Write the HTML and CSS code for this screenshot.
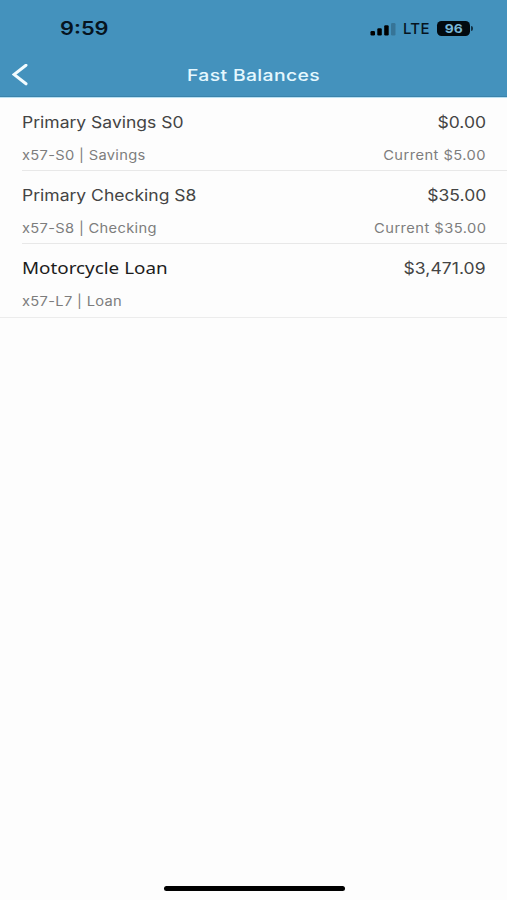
FILE: index.html
```html
<!DOCTYPE html>
<html lang="en">
<head>
    <meta charset="UTF-8">
    <meta name="viewport" content="width=device-width, initial-scale=1.0">
    <title>Fast Balances</title>
    <link rel="stylesheet" href="styles.css">
</head>
<body>
    <div class="screen">
        <header class="header">
            <div class="status-bar">
                <span class="time">9:59</span>
                <div class="status-icons">
                    <svg class="signal" width="26" height="14" viewBox="0 0 26 14">
                        <rect x="0.5" y="9" width="4.5" height="4.5" rx="1.2"/>
                        <rect x="7.3" y="6.3" width="4.5" height="7.2" rx="1.2"/>
                        <rect x="14.2" y="3.3" width="4.5" height="10.2" rx="1.2"/>
                        <rect class="signal-off" x="21" y="1" width="4.5" height="12.5" rx="1.2"/>
                    </svg>
                    <span class="network">LTE</span>
                    <div class="battery"><span>96</span></div>
                </div>
            </div>
            <nav class="nav-bar">
                <svg class="back" width="17" height="22" viewBox="0 0 17 22">
                    <path d="M14 1.2 L2 10.5 L14 19.8"/>
                </svg>
                <h1>Fast Balances</h1>
            </nav>
        </header>

        <ul class="account-list">
            <li class="account">
                <div class="line">
                    <span class="name">Primary Savings S0</span>
                    <span class="amount">$0.00</span>
                </div>
                <div class="line details">
                    <span>x57-S0 | Savings</span>
                    <span class="current">Current $5.00</span>
                </div>
            </li>
            <li class="account">
                <div class="line">
                    <span class="name">Primary Checking S8</span>
                    <span class="amount">$35.00</span>
                </div>
                <div class="line details">
                    <span>x57-S8 | Checking</span>
                    <span class="current">Current $35.00</span>
                </div>
            </li>
            <li class="account">
                <div class="line">
                    <span class="name loan">Motorcycle Loan</span>
                    <span class="amount">$3,471.09</span>
                </div>
                <div class="line details">
                    <span>x57-L7 | Loan</span>
                </div>
            </li>
        </ul>

        <div class="home-indicator"></div>
    </div>
</body>
</html>
```

FILE: styles.css
```css
* {
    margin: 0;
    padding: 0;
    box-sizing: border-box;
}

body {
    background-color: #fdfdfd;
    font-family: Inter, "Liberation Sans", sans-serif;
    color: #444;
}

.screen {
    display: flex;
    flex-direction: column;
    height: 900px;
    overflow: hidden;
}

/* Header */
.header {
    height: 98px;
    background-color: #4492bd;
    border-bottom: 1px solid #b9e0f2;
    box-shadow: inset 0 -1px 0 #3b83ab;
}

.status-bar {
    display: flex;
    justify-content: space-between;
    align-items: center;
    height: 52px;
    padding: 5px 37px 0 60px;
    color: #06141f;
}

.time {
    font-size: 18px;
    font-weight: 600;
    transform: scaleX(1.21);
    transform-origin: left;
}

.status-icons {
    display: flex;
    align-items: center;
}

.signal {
    margin-right: 7px;
}

.signal-off {
    opacity: 0.2;
}

.network {
    width: 34px;
    font-size: 15px;
    font-weight: 500;
    letter-spacing: 0.3px;
}

.battery {
    position: relative;
    display: flex;
    justify-content: center;
    align-items: center;
    width: 33px;
    height: 15px;
    border-radius: 4.5px;
    background-color: #020a10;
    color: #79b7d8;
    font-size: 12px;
    font-weight: 700;
}

.battery span {
    transform: scaleX(1.15);
}

.battery::after {
    content: '';
    position: absolute;
    top: 5px;
    right: -3px;
    width: 2px;
    height: 5px;
    border-radius: 0 2px 2px 0;
    background-color: #123246;
}

.nav-bar {
    display: grid;
    grid-template-columns: 40px 1fr 40px;
    align-items: center;
    height: 45px;
    padding-left: 12px;
    padding-right: 12px;
}

.back path {
    fill: none;
    stroke: #f2fcff;
    stroke-width: 3;
    stroke-linecap: round;
}

h1 {
    color: #e4f8ff;
    font-size: 16px;
    font-weight: 500;
    letter-spacing: 0.3px;
    text-align: center;
    transform: scaleX(1.21);
}

/* Accounts */
.account-list {
    list-style: none;
    border-bottom: 1px solid #ececec;
}

.account {
    height: 73px;
    margin-left: 22px;
    padding: 14px 21px 0 0;
}

.account:first-child {
    height: 72px;
}

.account:last-child {
    height: 74px;
}

.account + .account {
    border-top: 1px solid #e8e8e8;
}

.line {
    display: flex;
    justify-content: space-between;
    height: 21px;
    line-height: 21px;
    font-size: 15.5px;
}

.line span {
    transform: scaleX(1.13);
    transform-origin: left;
}

.line .amount,
.line .current {
    margin-left: auto;
    transform-origin: right;
}

.line .amount {
    letter-spacing: 0.05px;
}

.line .loan {
    color: #1c1c1c;
    font-family: "Noto Sans", sans-serif;
    transform: scaleX(1.215);
}

.details {
    margin-top: 12px;
    color: #7d7d7d;
    font-size: 13px;
    line-height: 20px;
}

.details span {
    letter-spacing: 0.28px;
}

.details .current {
    margin-right: -0.25px;
    letter-spacing: 0.4px;
}

.home-indicator {
    width: 181px;
    height: 5px;
    margin: auto auto 9px 164px;
    border-radius: 3px;
    background-color: #000;
}
```
